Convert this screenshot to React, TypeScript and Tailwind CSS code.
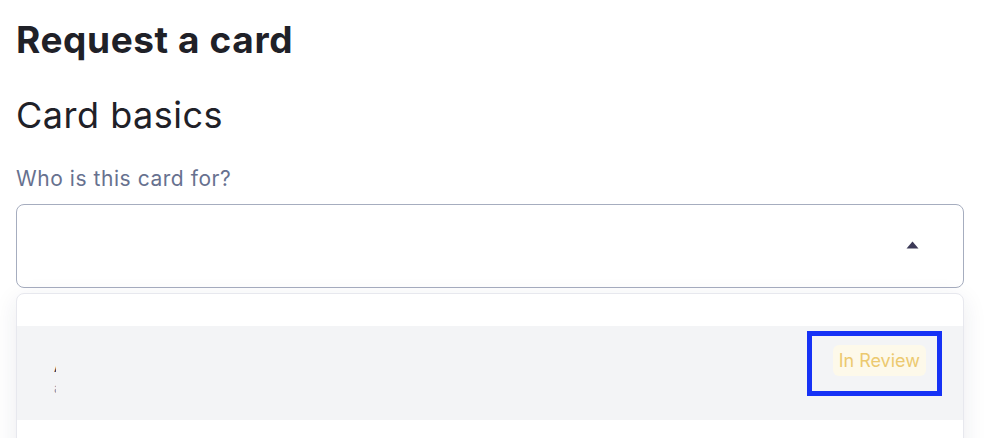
const RequestCard = () => {
  return (
    <div className="w-[1006px] h-[438px] overflow-hidden bg-white px-4 font-['Inter',sans-serif] text-[#1f2128]">
      <h1 className="mt-[18px] text-[37px] leading-[44px] font-bold tracking-[0.6px]">Request a card</h1>
      <h2 className="mt-[31px] text-[36px] leading-[44px] font-normal tracking-[0.5px]">Card basics</h2>

      <label className="mt-[29px] block text-[21px] leading-[26px] tracking-[0.55px] text-[#67718f]">Who is this card for?</label>

      <div className="mt-[12px] w-[948px] h-[84px] rounded-lg border border-[#a6adbf] flex items-center justify-end pr-[44px]">
        <svg width="13" height="8" viewBox="0 0 13 8" className="mt-[-2px]">
          <path d="M6.5 0.5 L12.5 7.5 L0.5 7.5 Z" fill="#3c3a57" />
        </svg>
      </div>

      <div className="mt-[5px] w-[948px] h-[200px] rounded-t-lg border border-[#e7e8ee] bg-white shadow-[0_6px_24px_rgba(30,41,80,0.09)] overflow-hidden">
        <div className="h-[32px]"></div>
        <div className="relative h-[94px] bg-[#f3f4f6] flex items-start justify-between pl-[37px] pr-[37px]">
          <div className="mt-[32px] w-[2px] overflow-hidden flex flex-col gap-[3px]">
            <span className="text-[14px] leading-[18px] text-[#2b2d38] whitespace-nowrap">Avery</span>
            <span className="text-[14px] leading-[18px] text-[#8a93b0] whitespace-nowrap">avery</span>
          </div>
          <span className="mt-[19px] rounded-md bg-[#fdf9ea] px-[6px] py-[4px] text-[18px] leading-[23px] text-[#ecc96f]">In Review</span>
          <div className="absolute left-[790px] top-[5px] w-[135px] h-[65px] border-[5px] border-[#1632f6]"></div>
        </div>
      </div>
    </div>
  );
};

export default function App() {
  return <RequestCard />;
}
